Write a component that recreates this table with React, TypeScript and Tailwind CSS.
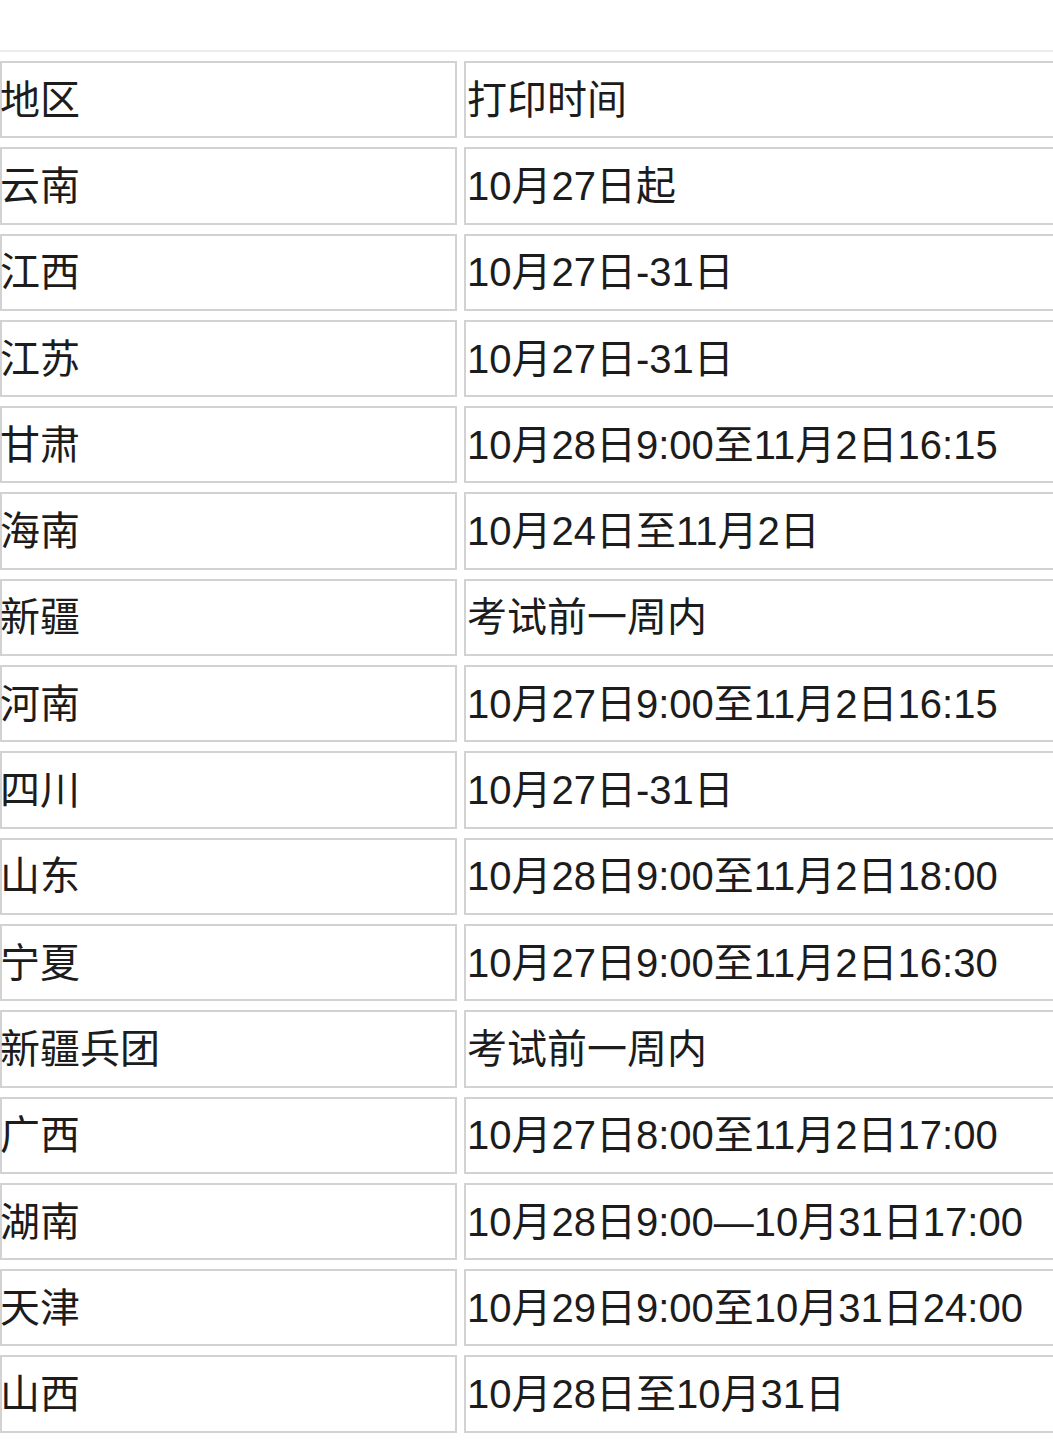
const rows: [string, string][] = [
  ['地区', '打印时间'],
  ['云南', '10月27日起'],
  ['江西', '10月27日-31日'],
  ['江苏', '10月27日-31日'],
  ['甘肃', '10月28日9:00至11月2日16:15'],
  ['海南', '10月24日至11月2日'],
  ['新疆', '考试前一周内'],
  ['河南', '10月27日9:00至11月2日16:15'],
  ['四川', '10月27日-31日'],
  ['山东', '10月28日9:00至11月2日18:00'],
  ['宁夏', '10月27日9:00至11月2日16:30'],
  ['新疆兵团', '考试前一周内'],
  ['广西', '10月27日8:00至11月2日17:00'],
  ['湖南', '10月28日9:00—10月31日17:00'],
  ['天津', '10月29日9:00至10月31日24:00'],
  ['山西', '10月28日至10月31日'],
]

export default function App() {
  return (
    <div className="w-[1053px] h-[1440px] overflow-hidden bg-white pt-[50px]">
      <div
        className="border-t-2 border-[#ededed] pt-[9px] flex flex-col gap-[9px] text-[40px] text-[#1c1c1c] w-[1200px]"
        style={{ fontFamily: '"Liberation Sans", "Noto Sans CJK SC", sans-serif' }}
      >
        {rows.map(([region, time], i) => (
          <div key={i} className="flex gap-[7px]">
            <div className="w-[457px] h-[77.3px] border-2 border-[#d2d2d2] flex items-center leading-none">
              <span className="-ml-[2px]">{region}</span>
            </div>
            <div className="w-[680px] h-[77.3px] border-2 border-[#d2d2d2] flex items-center pl-[1px] leading-none">
              {time}
            </div>
          </div>
        ))}
      </div>
    </div>
  )
}
